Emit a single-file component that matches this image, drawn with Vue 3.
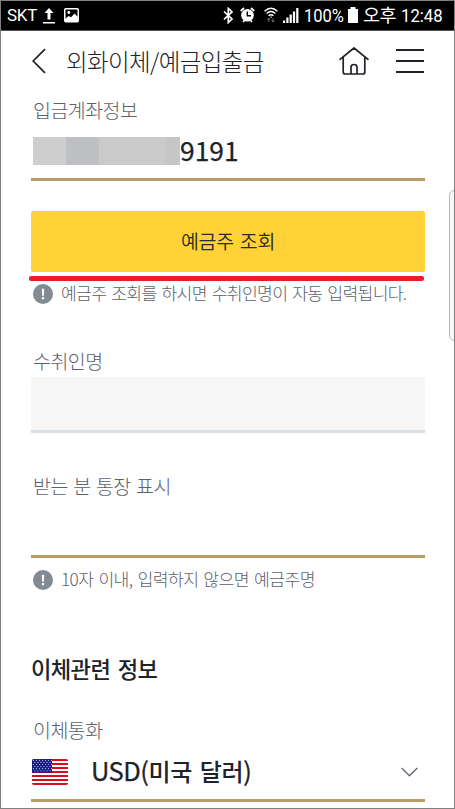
<script setup>
const signal = [2.5, 5.5, 8.5, 11.5, 15]
const stripes = [0, 2, 4, 6, 8, 10, 12]
const stars = []
for (let r = 0; r < 6; r++) {
  for (let c = 0; c < (r % 2 ? 6 : 7); c++) stars.push({ x: 1.4 + c * 3 + (r % 2 ? 1.5 : 0), y: 1.3 + r * 2.1 })
}
</script>

<template>
  <div class="phone">
    <div class="status">
      <span class="carrier">SKT</span>
      <svg class="upload" width="12" height="16" viewBox="0 0 12 16"><path d="M6 0 10.5 5H7.5V11.5H4.5V5H1.5ZM0 14H12V15.5H0Z" fill="#fff" /></svg>
      <svg class="photo" width="15" height="15" viewBox="0 0 15 15">
        <rect x=".75" y=".75" width="13.5" height="13" rx="1" fill="none" stroke="#fff" stroke-width="1.5" />
        <circle cx="4.8" cy="4.5" r="1.4" fill="#fff" /><path d="M1 11 4.5 8 7 9.3 10.5 5.5 14 9V14H1Z" fill="#fff" />
      </svg>
      <div class="status-right">
        <svg class="bt" width="11" height="17" viewBox="0 0 11 17" fill="none" stroke="#fff" stroke-width="1.7"><path d="M1 4.5 9 12 5.3 15.5V1.5L9 5 1 12.3" /></svg>
        <svg class="alarm" width="15" height="16" viewBox="0 0 15 16">
          <circle cx="7.5" cy="8.2" r="6.3" fill="#fff" /><path d="M.7 4 4 1M14.3 4 11 1M3 15 5 13M12 15 10 13" stroke="#fff" stroke-width="1.7" /><path d="M7.3 4.5V8.8H11" fill="none" stroke="#000" stroke-width="1.4" />
        </svg>
        <svg class="wifi" width="14" height="16" viewBox="0 0 14 16" fill="none" stroke="#fff" stroke-width="1.4">
          <path d="M.6 4.2Q7-1.8 13.4 4.2M2.6 6.6Q7 2.6 11.4 6.6M4.6 8.8Q7 6.8 9.4 8.8" /><path d="M5.8 9.8H8.2L7 11Z" fill="#fff" stroke="none" />
          <path d="M4.8 15V11.5M3.5 13 4.8 11.5 6 13M9 11.5V15M7.8 13.6 9 15 10.3 13.6" stroke="#777" stroke-width="1" />
        </svg>
        <svg class="signal" width="16" height="16" viewBox="0 0 16 16" fill="#fff"><rect v-for="(h, i) in signal" :key="h" :x="i * 3.3" :y="16 - h" width="2.2" :height="h" /></svg>
        <span class="percent"><span>100%</span></span>
        <svg class="battery" width="10" height="16" viewBox="0 0 10 16"><path d="M2.5 0H7.5V2H10V16H0V2H2.5Z" fill="#fff" /></svg>
        <span class="ampm">오후</span>
        <span class="clock"><span>12:48</span></span>
      </div>
    </div>

    <header class="header">
      <svg class="back" width="14" height="26" viewBox="0 0 14 26" fill="none" stroke="#202229" stroke-width="1.7"><path d="M13 1.2 1.2 13 13 24.8" /></svg>
      <h1>외화이체/예금입출금</h1>
      <svg class="home" width="30" height="28" viewBox="0 0 30 28" fill="none" stroke="#202229" stroke-width="1.7" stroke-linejoin="round" stroke-linecap="round">
        <path d="M1 12.3 15 1 29 12.3M4.2 10V25Q4.2 27 6.2 27H23.8Q25.8 27 25.8 25V10M12 27V20Q12 17.5 15 17.5T18 20V27" />
      </svg>
      <div class="menu"><i></i><i></i><i></i></div>
    </header>

    <main class="content">
      <div class="label first">입금계좌정보</div>
      <div class="account"><div class="mask"><i></i><i></i><i></i><i></i><i></i></div><span>9191</span></div>
      <button class="lookup">예금주 조회</button>
      <div class="redline"></div>
      <div class="note"><svg width="20" height="20" viewBox="0 0 20 20"><circle cx="10" cy="10" r="10" fill="#828a93" /><path d="M8.8 4.8H11.2L10.9 11.8H9.1ZM8.9 13.1H11.1V15.2H8.9Z" fill="#fff" /></svg><span class="tight">예금주 조회를 하시면 수취인명이 자동 입력됩니다.</span></div>
      <div class="label payee">수취인명</div>
      <div class="field"></div>
      <div class="label passbook">받는 분 통장 표시</div>
      <div class="entry"></div>
      <div class="note second"><svg width="20" height="20" viewBox="0 0 20 20"><circle cx="10" cy="10" r="10" fill="#828a93" /><path d="M8.8 4.8H11.2L10.9 11.8H9.1ZM8.9 13.1H11.1V15.2H8.9Z" fill="#fff" /></svg><span>10자 이내, 입력하지 않으면 예금주명</span></div>
      <h2>이체관련 정보</h2>
      <div class="label currency">이체통화</div>
      <div class="select">
        <svg class="flag" width="36" height="26" viewBox="0 0 36 26">
          <defs><clipPath id="flag-round"><rect width="36" height="26" rx="2" /></clipPath></defs>
          <g clip-path="url(#flag-round)">
            <rect width="36" height="26" fill="#fff" /><rect v-for="s in stripes" :key="s" :y="s * 2" width="36" height="2" fill="#d80f18" />
            <rect width="20" height="13.6" fill="#171795" /><circle v-for="(s, i) in stars" :key="i" :cx="s.x" :cy="s.y" r=".6" fill="#c5c5f2" />
          </g>
        </svg>
        <span class="currency-name"><span class="code">USD(</span>미국 달러<span class="code">)</span></span>
        <svg class="chevron" width="17" height="10" viewBox="0 0 17 10" fill="none" stroke="#676b75" stroke-width="1.4"><path d="M.7 1 8.5 8.7 16.3 1" /></svg>
      </div>
    </main>
    <div class="edge-handle"></div>
  </div>
</template>

<style>
body { margin: 0; background: #fff; }
</style>

<style scoped>
* { box-sizing: border-box; }
.phone { position: relative; width: 455px; height: 809px; border: 1px solid #808080; background: #fff; overflow: hidden; font-family: "Noto Sans CJK KR", sans-serif; color: #202229; }
svg { display: block; flex: none; }
.status { display: flex; height: 30px; background: #000; color: #fff; border-bottom: 1px solid #555; padding-left: 6px; font-family: Roboto, "Noto Sans CJK KR", sans-serif; line-height: 29px; }
.carrier { width: 36px; font-size: 17px; letter-spacing: -.3px; }
.upload { margin-top: 7px; }
.photo { margin: 7px 0 0 9px; }
.status-right { display: flex; margin-left: auto; width: 231px; }
.bt { margin-top: 6px; }
.alarm { margin: 6px 0 0 6px; }
.wifi { margin: 6px 0 0 9px; }
.signal { margin: 6px 0 0 5px; }
.percent { width: 40px; margin-left: 5px; }
.percent span { display: inline-block; font-size: 19px; transform: scaleX(.87); transform-origin: left; }
.battery { margin: 6px 0 0 4px; }
.ampm { width: 34px; margin-left: 5px; font-size: 18.5px; letter-spacing: -.5px; white-space: nowrap; line-height: 31px; height: 29px; }
.clock { margin-left: 4px; width: 42px; }
.clock span { display: inline-block; font-size: 19px; transform: scaleX(.88); transform-origin: left; }
.header { display: flex; height: 61px; align-items: center; padding: 0 30px 0 31px; }
.back { width: 14px; margin-top: -1px; }
h1 { margin: -2px 0 0 20px; font-size: 23.5px; font-weight: 300; line-height: 34px; letter-spacing: -.6px; white-space: nowrap; flex: 1; }
.home { margin-right: 27px; margin-top: -2px; }
.menu { display: flex; flex-direction: column; gap: 9px; width: 28px; margin-top: -1px; }
.menu i { height: 2px; background: #202229; }
.content { padding: 0 29px 0 30px; }
.label { height: 28px; padding-left: 2px; line-height: 28px; font-size: 19.5px; font-weight: 300; letter-spacing: -.55px; word-spacing: 1.6px; color: #5c606b; white-space: nowrap; }
.label.first { margin-top: 4px; }
.account, .entry, .select { border-bottom: 3px solid #b99b66; }
.account { display: flex; align-items: center; height: 57px; padding: 2px 0 2px 2px; font-size: 26.4px; font-weight: 400; }
.account span { line-height: 30px; margin-top: -2px; -webkit-text-stroke: .25px #202229; }
.mask { display: flex; width: 147px; height: 28px; }
.mask i { width: 33px; background: #cacaca; }
.mask i:first-child { background: #cecece; }
.mask i:nth-child(2) { background: #bec0c3; }
.mask i:last-child { width: 15px; background: #c6c6c6; }
.lookup { display: block; width: 394px; height: 61px; margin: 30px 0 0; padding: 0 0 3px; border: 0; border-radius: 2px; background: #ffd237; color: #2c2c27; font-family: inherit; font-size: 19.5px; font-weight: 350; letter-spacing: -.3px; word-spacing: 2px; }
.redline { height: 5px; margin: 4px 1px 0 -2px; border-radius: 2px; background: #ed1c24; }
.note { display: flex; align-items: center; height: 26px; padding-left: 2px; color: #5c606b; font-size: 17.2px; font-weight: 300; letter-spacing: -.6px; word-spacing: 1.8px; white-space: nowrap; }
.note span { margin: -2px 0 0 8px; line-height: 26px; }
.note .tight { letter-spacing: -.7px; }
.label.payee { margin-top: 40px; }
.field { height: 56px; margin-top: 2px; background: #f6f6f6; border-bottom: 3px solid #d9dfe3; }
.label.passbook { margin-top: 39px; }
.entry { height: 58px; }
.note.second { margin-top: 9px; }
h2 { margin: 60px 0 0; height: 30px; line-height: 30px; font-size: 22.2px; font-weight: 500; letter-spacing: -.6px; word-spacing: 3px; }
.label.currency { margin-top: 33px; }
.select { display: flex; align-items: center; height: 58px; padding: 0 7px 0 1px; }
.currency-name { flex: 1; margin: -3px 0 0 23px; font-size: 24px; font-weight: 500; letter-spacing: -.3px; word-spacing: 2.5px; line-height: 34px; }
.code { font-size: 25.5px; font-weight: 400; letter-spacing: -.5px; -webkit-text-stroke: .25px #202229; }
.edge-handle { position: absolute; top: 189px; right: -7px; width: 12px; height: 151px; border: 1px solid #b9b9b9; border-radius: 5px; background: #f8f8f8; }
</style>
